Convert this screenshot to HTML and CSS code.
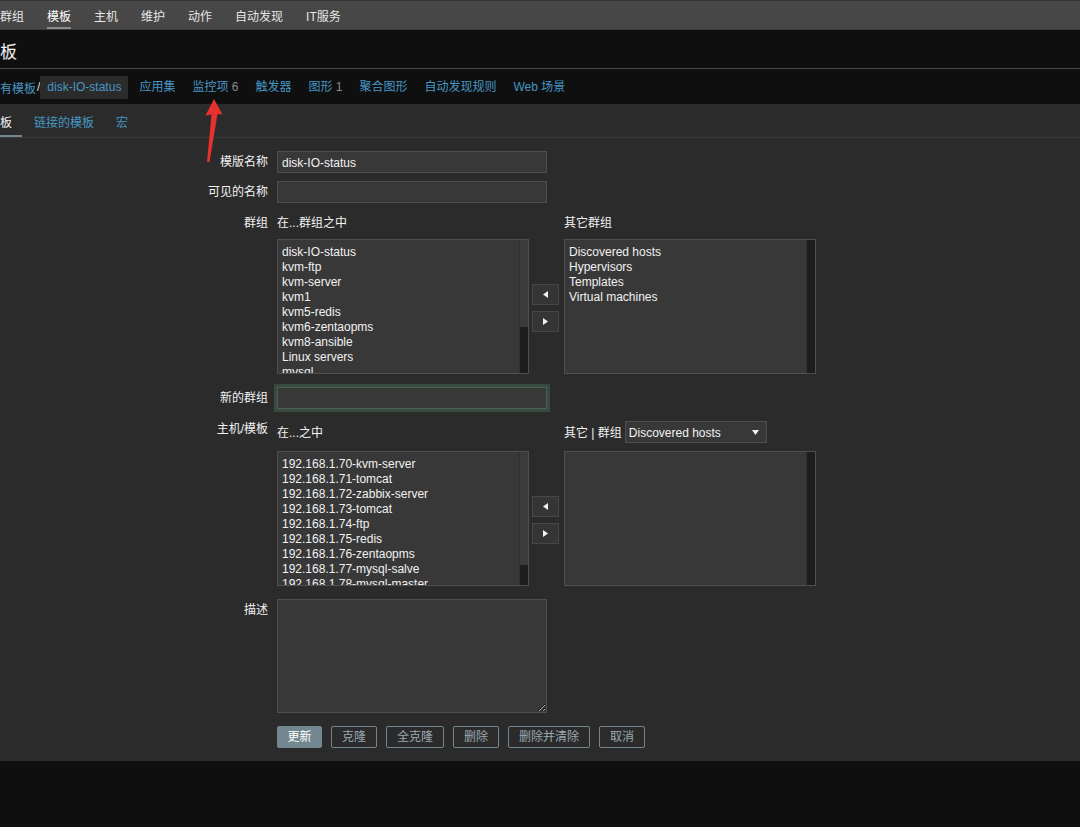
FILE: index.html
```html
<!DOCTYPE html>
<html lang="zh">
<head>
<meta charset="utf-8">
<title>模板</title>
<link rel="stylesheet" href="styles.css">
</head>
<body>
<nav class="topnav">
  <span class="nav-item">群组</span>
  <span class="nav-item active">模板</span>
  <span class="nav-item">主机</span>
  <span class="nav-item">维护</span>
  <span class="nav-item">动作</span>
  <span class="nav-item">自动发现</span>
  <span class="nav-item">IT服务</span>
</nav>
<header class="page-header"><h1>板</h1></header>
<nav class="breadcrumbs">
  <span class="crumb-root">有模板</span><span class="sep">/</span>
  <span class="crumb current">disk-IO-status</span>
  <span class="crumb">应用集</span>
  <span class="crumb">监控项 <span class="count">6</span></span>
  <span class="crumb">触发器</span>
  <span class="crumb">图形 <span class="count">1</span></span>
  <span class="crumb">聚合图形</span>
  <span class="crumb">自动发现规则</span>
  <span class="crumb">Web 场景</span>
</nav>
<div class="tabs">
  <span class="tab active">板</span>
  <span class="tab">链接的模板</span>
  <span class="tab">宏</span>
</div>
<main class="form">
  <div class="row">
    <div class="label lbl-input">模版名称</div>
    <div class="field"><input class="text" type="text" value="disk-IO-status"></div>
  </div>
  <div class="row">
    <div class="label lbl-input">可见的名称</div>
    <div class="field"><input class="text" type="text" value=""></div>
  </div>
  <div class="row row-list">
    <div class="label lbl-head">群组</div>
    <div class="field dual">
      <div class="dual-head">在...群组之中</div>
      <div></div>
      <div class="dual-head">其它群组</div>
      <div class="listbox">
        <div class="items">
          <div>disk-IO-status</div><div>kvm-ftp</div><div>kvm-server</div><div>kvm1</div><div>kvm5-redis</div><div>kvm6-zentaopms</div><div>kvm8-ansible</div><div>Linux servers</div><div>mysql</div>
        </div>
        <div class="scroll"><div class="thumb thumb-a"></div></div>
      </div>
      <div class="movers">
        <span class="mover"><svg width="5" height="7" viewBox="0 0 5 7"><path d="M5 0L0 3.5L5 7Z" fill="#f2f2f2"/></svg></span>
        <span class="mover"><svg width="5" height="7" viewBox="0 0 5 7"><path d="M0 0L5 3.5L0 7Z" fill="#f2f2f2"/></svg></span>
      </div>
      <div class="listbox">
        <div class="items">
          <div>Discovered hosts</div><div>Hypervisors</div><div>Templates</div><div>Virtual machines</div>
        </div>
        <div class="scroll"></div>
      </div>
    </div>
  </div>
  <div class="row row-new">
    <div class="label lbl-input">新的群组</div>
    <div class="field"><input class="text glow" type="text" value=""></div>
  </div>
  <div class="row row-list">
    <div class="label lbl-top">主机/模板</div>
    <div class="field dual">
      <div class="dual-head tall">在...之中</div>
      <div></div>
      <div class="dual-head tall">其它 | 群组
        <span class="select">Discovered hosts<svg class="caret" width="7" height="5" viewBox="0 0 7 5"><path d="M0 0H7L3.5 5Z" fill="#f2f2f2"/></svg></span>
      </div>
      <div class="listbox">
        <div class="items">
          <div>192.168.1.70-kvm-server</div><div>192.168.1.71-tomcat</div><div>192.168.1.72-zabbix-server</div><div>192.168.1.73-tomcat</div><div>192.168.1.74-ftp</div><div>192.168.1.75-redis</div><div>192.168.1.76-zentaopms</div><div>192.168.1.77-mysql-salve</div><div>192.168.1.78-mysql-master</div>
        </div>
        <div class="scroll"><div class="thumb thumb-b"></div></div>
      </div>
      <div class="movers">
        <span class="mover"><svg width="5" height="7" viewBox="0 0 5 7"><path d="M5 0L0 3.5L5 7Z" fill="#f2f2f2"/></svg></span>
        <span class="mover"><svg width="5" height="7" viewBox="0 0 5 7"><path d="M0 0L5 3.5L0 7Z" fill="#f2f2f2"/></svg></span>
      </div>
      <div class="listbox">
        <div class="items"></div>
        <div class="scroll"></div>
      </div>
    </div>
  </div>
  <div class="row row-desc">
    <div class="label lbl-desc">描述</div>
    <div class="field"><textarea class="desc"></textarea></div>
  </div>
  <div class="row">
    <div></div>
    <div class="field actions">
      <button class="btn main">更新</button>
      <button class="btn">克隆</button>
      <button class="btn">全克隆</button>
      <button class="btn">删除</button>
      <button class="btn">删除并清除</button>
      <button class="btn">取消</button>
    </div>
  </div>
</main>
<svg class="arrow" width="30" height="70" viewBox="200 96 30 70">
  <path d="M214 99L222.5 114.5L217.5 114L209.5 162L207 162L211.5 114.5L205.5 115.5Z" fill="#e8302e"/>
</svg>
</body>
</html>
```
FILE: styles.css
```css
* { box-sizing: border-box; }
html, body { margin: 0; padding: 0; }
body {
  width: 1080px;
  height: 827px;
  overflow: hidden;
  position: relative;
  background: #0f0f0f;
  color: #f2f2f2;
  font-family: "Liberation Sans", "Noto Sans CJK SC", Arial, sans-serif;
  font-size: 12px;
}

.topnav {
  height: 30px;
  background: #474747;
  border-top: 1px solid #353535;
  border-bottom: 1px solid #3c3c3c;
  display: flex;
  align-items: stretch;
  gap: 23px;
}
.nav-item {
  display: flex;
  align-items: center;
  color: #e6e6e6;
}
.nav-item.active {
  color: #ffffff;
  box-shadow: inset 0 -2px 0 #8a8a8a;
}

.page-header {
  height: 39px;
  background: #0f0f0f;
  border-bottom: 1px solid #4a4a4a;
  padding-top: 11px;
}
.page-header h1 {
  margin: 0;
  font-size: 17px;
  line-height: 24px;
  font-weight: normal;
  color: #f2f2f2;
}

.breadcrumbs {
  height: 35px;
  background: #0f0f0f;
  display: flex;
  align-items: center;
  gap: 5px;
  padding-top: 1px;
  color: #4796c4;
}
.crumb-root { color: #4796c4; }
.sep { color: #e0e0e0; margin: 0 -5px 0 -4px; }
.crumb {
  height: 23px;
  line-height: 23px;
  padding: 0 6px;
}
.crumb.current { background: #2b2b2b; padding: 0 7px; }
.count { color: #8c8c8c; }

.tabs {
  height: 34px;
  width: calc(100% + 10px);
  background: #2b2b2b;
  border-bottom: 1px solid #3a3a3a;
  display: flex;
  gap: 2px;
  margin-left: -10px;
  padding-top: 1px;
}
.tab {
  display: flex;
  align-items: center;
  padding: 0 10px;
  color: #4796c4;
}
.tab.active {
  color: #f2f2f2;
  box-shadow: inset 0 -2px 0 #76858e;
}

.form {
  background: #2b2b2b;
  padding: 13px 0 13px 0;
  display: flex;
  flex-direction: column;
  gap: 8px;
}
.row {
  display: grid;
  grid-template-columns: 268px 1fr;
  column-gap: 9px;
  align-items: start;
}
.row-list { margin-bottom: 5px; }
.row-new { margin-bottom: 4px; }
.row-desc { margin-bottom: 5px; }

.label {
  text-align: right;
  color: #f2f2f2;
  white-space: nowrap;
}
.lbl-input { height: 22px; padding-top: 1px; line-height: 21px; }
.lbl-head { padding-top: 4px; line-height: 16px; }
.lbl-top { padding-top: 0; line-height: 16px; }
.lbl-desc { padding-top: 3px; line-height: 16px; }

.text {
  display: block;
  width: 270px;
  height: 22px;
  margin: 0;
  padding: 1px 4px 0;
  background: #383838;
  border: 1px solid #4f4f4f;
  color: #f2f2f2;
  font: inherit;
  outline: none;
}
.text.glow {
  border-color: #4c5f55;
  box-shadow: 0 0 0 3px #364a3f;
}

.dual {
  display: grid;
  grid-template-columns: 252px 35px 252px;
  grid-template-rows: auto 135px;
  row-gap: 8px;
}
.dual-head {
  padding-top: 4px;
  line-height: 16px;
  height: 20px;
  white-space: nowrap;
}
.dual-head.tall {
  padding-top: 1px;
  height: 22px;
  display: flex;
  align-items: center;
  gap: 3px;
}

.listbox {
  display: flex;
  height: 135px;
  background: #383838;
  border: 1px solid #4f4f4f;
  overflow: hidden;
}
.items {
  flex: 1;
  padding: 5px 4px 0;
  line-height: 15px;
  overflow: hidden;
  white-space: nowrap;
}
.scroll {
  width: 9px;
  background: #1d1d1d;
  border-left: 1px solid #303030;
}
.thumb { background: #3b3b3b; }
.thumb-a { height: 87px; }
.thumb-b { height: 113px; }

.movers {
  display: flex;
  flex-direction: column;
  justify-content: center;
  gap: 6px;
  padding-left: 3px;
  padding-top: 2px;
}
.mover {
  width: 27px;
  height: 21px;
  background: #353535;
  border: 1px solid #474747;
  display: flex;
  align-items: center;
  justify-content: center;
}

.select {
  width: 142px;
  height: 22px;
  margin-top: -1px;
  background: #383838;
  border: 1px solid #4f4f4f;
  display: flex;
  align-items: center;
  justify-content: space-between;
  padding: 1px 7px 0 3px;
}
.caret { display: block; }

.desc {
  display: block;
  width: 270px;
  height: 114px;
  margin: 0;
  background: #383838;
  border: 1px solid #4f4f4f;
  color: #f2f2f2;
  font: inherit;
  resize: both;
  outline: none;
}

.actions {
  display: flex;
  gap: 9px;
}
.btn {
  height: 22px;
  margin: 0;
  padding: 0 10px;
  background: transparent;
  border: 1px solid #75858e;
  border-radius: 2px;
  color: #9aa8b0;
  font: inherit;
  line-height: 20px;
}
.btn.main {
  width: 45px;
  padding: 0;
  background: #72878f;
  border-color: #72878f;
  color: #ffffff;
}

.arrow {
  position: absolute;
  left: 200px;
  top: 96px;
}
```
